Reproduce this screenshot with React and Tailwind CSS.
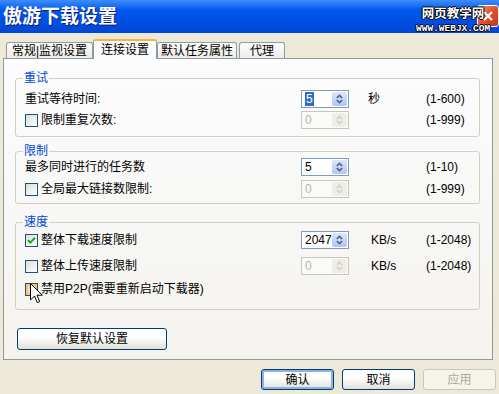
import React from "react";

const Spin = ({ value, disabled, selected }) => (
  <div
    className={`flex h-[18px] w-[48px] border p-[1px] ${
      disabled ? "border-[#C9C7BA] bg-[#FAFAF7]" : "border-[#7F9DB9] bg-white"
    }`}
  >
    <div
      className={`flex flex-1 items-center pl-[2px] leading-none ${
        disabled ? "text-[#B6B4A8]" : "text-black"
      }`}
    >
      {selected ? (
        <span className="bg-[#316AC5] px-[1px] leading-[14px] text-white">{value}</span>
      ) : (
        value
      )}
    </div>
    <div
      className={`flex w-[15px] items-center justify-center rounded-[2px] ${
        disabled ? "bg-[#EEEDE6]" : "bg-linear-to-b from-[#DCE6FC] to-[#B1C5F4]"
      }`}
    >
      <svg width="9" height="12" viewBox="0 0 9 12">
        <path
          d="M1.8 5 L4.5 2.4 L7.2 5 M1.8 7 L4.5 9.6 L7.2 7"
          fill="none"
          stroke={disabled ? "#D2D0C6" : "#4D6185"}
          strokeWidth="1.6"
        />
      </svg>
    </div>
  </div>
);

const Check = ({ checked, hover }) => (
  <span
    className={`flex h-[13px] w-[13px] shrink-0 items-center justify-center border border-[#1C5180] ${
      hover
        ? "bg-[#EDE3C8] shadow-[inset_0_0_0_2px_#F5C664]"
        : "bg-linear-to-br from-[#DCDCD7] to-white"
    }`}
  >
    {checked && (
      <svg width="9" height="9" viewBox="0 0 9 9">
        <path d="M1 4.2 L3.3 6.6 L8 1.8" fill="none" stroke="#21A121" strokeWidth="2" />
      </svg>
    )}
  </span>
);

const Row = ({ label, check, checked, spin, unit, unitPad = "pl-[19px]", range, className = "" }) => (
  <div className={`flex h-[18px] items-center ${className}`}>
    <div className="flex w-[276px] items-center gap-[3px]">
      {check && <Check checked={checked} />}
      <span>{label}</span>
    </div>
    {spin}
    <div className={`w-[77px] ${unitPad}`}>{unit}</div>
    <div>{range}</div>
  </div>
);

const Group = ({ title, className = "", children }) => (
  <fieldset className={`w-[465px] rounded-[3px] border border-[#D0D0BF] pl-[9px] ${className}`}>
    <legend className="-ml-[2px] px-[1px] leading-[14px] text-[#0046D5]">{title}</legend>
    {children}
  </fieldset>
);

const Tab = ({ children, w, active, className = "" }) =>
  active ? (
    <div
      className={`relative z-10 -mb-[1px] flex h-[20px] items-center justify-center rounded-t-[3px] border border-b-0 border-[#919B9C] border-t-[2px] border-t-[#F7B441] bg-[#FCFCFE] ${w} ${className}`}
    >
      {children}
    </div>
  ) : (
    <div
      className={`flex h-[16px] items-center justify-center rounded-t-[3px] border border-b-0 border-[#919B9C] bg-linear-to-b from-white to-[#ECEBE6] ${w} ${className}`}
    >
      {children}
    </div>
  );

const Btn = ({ children, w, primary, disabled, className = "" }) => (
  <button
    className={`flex items-center justify-center rounded-[3px] border ${w} ${
      disabled
        ? "border-[#C9C7BA] bg-[#F5F4EA] text-[#ACA899]"
        : "border-[#003C74] bg-linear-to-b from-white from-40% to-[#E2E0D6] text-black"
    } ${primary ? "shadow-[inset_0_0_0_2px_#8DB2E3]" : ""} ${className}`}
  >
    {children}
  </button>
);

export default function App() {
  return (
    <div className="flex h-[394px] w-[499px] flex-col overflow-hidden bg-[#ECE9D8] font-['Liberation_Sans','Noto_Sans_CJK_SC',sans-serif] text-[12px] leading-[14px] text-black">
      {/* TITLE BAR */}
      <div className="relative flex h-[33px] shrink-0 items-center bg-linear-to-b from-[#3D8DFA] via-[#0058EE] via-30% to-[#0046D4] pl-[3px]">
        <span className="text-[19px] font-bold leading-none text-white [text-shadow:1px_1px_0_#0A1A78]">
          傲游下载设置
        </span>

        <div className="absolute left-[477px] top-[5px] flex h-[22px] w-[22px] items-center justify-center rounded-[3px] border border-white bg-linear-to-br from-[#F0916F] via-[#E0512B] to-[#C0391A]">
          <svg width="12" height="12" viewBox="0 0 12 12">
            <path d="M2 2 L10 10 M10 2 L2 10" stroke="white" strokeWidth="2.2" />
          </svg>
        </div>

        <div className="absolute left-[416px] top-[7px] flex flex-col items-center">
          <span className="text-[12.5px] font-bold leading-[15px] text-white [text-shadow:1px_0_0_#000,-1px_0_0_#000,0_1px_0_#000,0_-1px_0_#000]">
            网页教学网
          </span>
          <span className="mt-[2px] font-['Liberation_Mono',monospace] text-[9.5px] font-bold leading-[9px] text-white [text-shadow:1px_0_0_#000,-1px_0_0_#000,0_1px_0_#000,0_-1px_0_#000]">
            WWW.WEBJX.COM
          </span>
        </div>
      </div>

      {/* BODY */}
      <div className="pl-[3px] pt-[6px]">
        {/* TABS */}
        <div className="flex h-[19px] items-end pl-[3px]">
          <Tab w="w-[87px]">常规|监视设置</Tab>
          <Tab w="w-[64px]" active>
            连接设置
          </Tab>
          <Tab w="w-[80px]">默认任务属性</Tab>
          <Tab w="w-[46px]" className="ml-[2px]">
            代理
          </Tab>
        </div>

        {/* PANEL */}
        <div className="h-[302px] w-[490px] border border-[#919B9C] bg-linear-to-b from-[#FCFCFE] to-[#F4F3EE] pl-[11px] pt-[12px]">
          <Group title="重试" className="pb-[7px]">
            <Row
              className="mt-[5px]"
              label="重试等待时间:"
              spin={<Spin value="5" selected />}
              unit="秒"
              range="(1-600)"
            />
            <Row
              className="mt-[3px]"
              label="限制重复次数:"
              check
              spin={<Spin value="0" disabled />}
              range="(1-999)"
            />
          </Group>

          <Group title="限制" className="mt-[7px] pb-[5px]">
            <Row label="最多同时进行的任务数" spin={<Spin value="5" />} range="(1-10)" />
            <Row
              className="mt-[4px]"
              label="全局最大链接数限制:"
              check
              spin={<Spin value="0" disabled />}
              range="(1-999)"
            />
          </Group>

          <Group title="速度" className="mt-[11px] pb-[11px]">
            <Row
              className="mt-[2px]"
              label="整体下载速度限制"
              check
              checked
              spin={<Spin value="2047" />}
              unit="KB/s"
              unitPad="pl-[22px]"
              range="(1-2048)"
            />
            <Row
              className="mt-[8px]"
              label="整体上传速度限制"
              check
              spin={<Spin value="0" disabled />}
              unit="KB/s"
              unitPad="pl-[22px]"
              range="(1-2048)"
            />
            <div className="mt-[5px] flex h-[18px] items-center gap-[3px]">
              <span className="relative">
                <Check hover />
                <svg
                  className="absolute left-[5px] top-[0px]"
                  width="13"
                  height="21"
                  viewBox="0 0 13 21"
                >
                  <path
                    d="M0.5 0.5 L0.5 17 L4.5 13 L7.3 19.6 L9.7 18.6 L7 12.2 L12.3 12.2 Z"
                    fill="white"
                    stroke="black"
                    strokeWidth="1"
                  />
                </svg>
              </span>
              <span>禁用P2P(需要重新启动下载器)</span>
            </div>
          </Group>

          <Btn w="w-[150px]" className="ml-[2px] mt-[18px] h-[22px]">
            恢复默认设置
          </Btn>
        </div>

        {/* ACTIONS */}
        <div className="flex justify-end gap-[8px] pr-[3px] pt-[9px]">
          <Btn w="w-[73px]" primary className="h-[21px]">
            确认
          </Btn>
          <Btn w="w-[73px]" className="h-[21px]">
            取消
          </Btn>
          <Btn w="w-[73px]" disabled className="h-[21px]">
            应用
          </Btn>
        </div>
      </div>
    </div>
  );
}
